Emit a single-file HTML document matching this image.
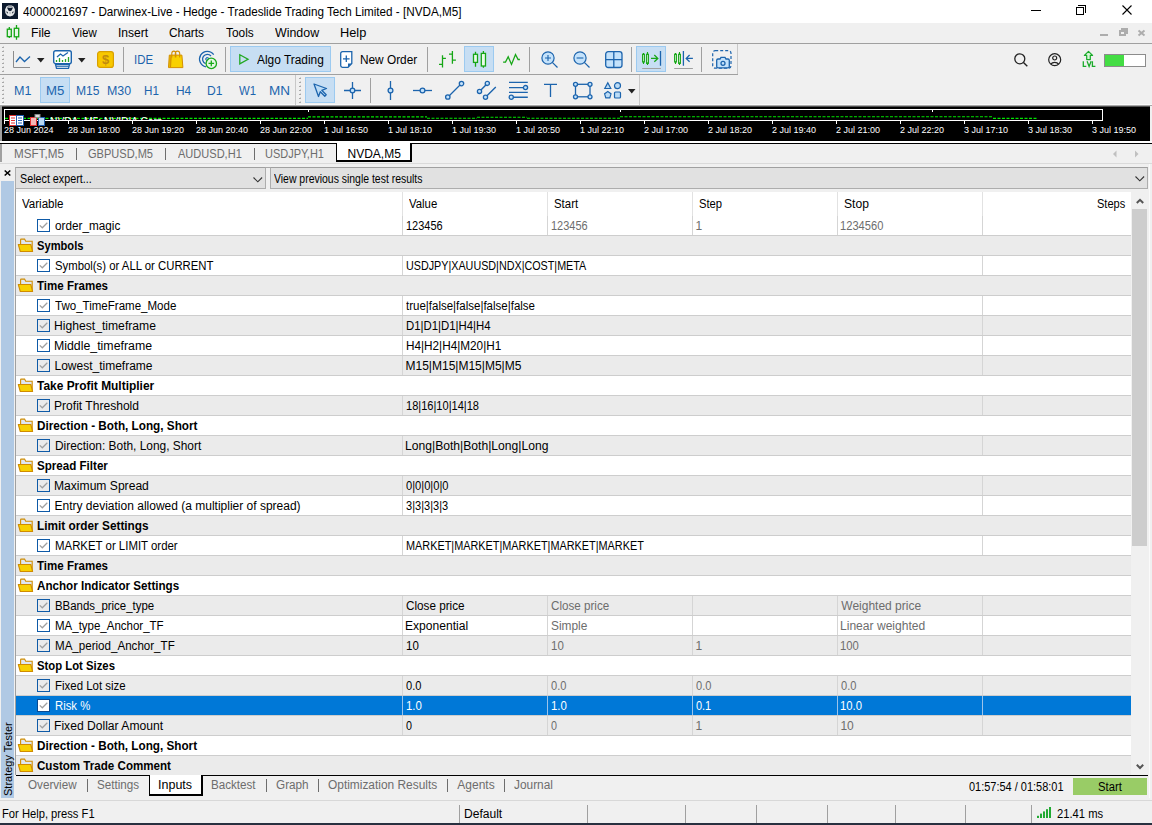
<!DOCTYPE html>
<html><head><meta charset="utf-8">
<style>
*{box-sizing:border-box;margin:0;padding:0}
html,body{width:1152px;height:825px;overflow:hidden;background:#f0f0f0;font-family:"Liberation Sans",sans-serif;color:#000;position:relative}
.a{position:absolute}
.t{position:absolute;white-space:nowrap;line-height:20px;height:20px}
svg{position:absolute;overflow:visible}
</style></head><body>

<div class="a" style="left:0px;top:0px;width:1152px;height:23px;background:#fff;"></div>
<div class="a" style="left:2px;top:3px;width:16px;height:16px;background:#0d1a2e;"></div>
<svg style="left:2px;top:3px" width="16" height="16" viewBox="0 0 16 16"><path d="M4.6 3.3 L6.5 2.4 H9.5 L11.4 3.3 L12.9 6.2 L12.7 10 L11 12.6 L8 13.4 L5 12.6 L3.3 10 L3.1 6.2Z" fill="#e6e8ea"/><rect x="5.6" y="3.2" width="4.8" height="1.2" fill="#8a9098"/><path d="M5 4.6 Q8 5.4 11 4.6 L9.6 7.4 L8 8.3 L6.4 7.4Z" fill="#0d1a2e"/><path d="M4.3 8.2 L5.8 9 L6 10.6 L4.8 10Z M11.7 8.2 L10.2 9 L10 10.6 L11.2 10Z" fill="#2a3340"/><rect x="7.3" y="9.2" width="1.5" height="1.6" fill="#b8bcc0"/></svg>
<div class="t" style="left:22.81px;top:1.84px;font-size:12px;color:#000;font-weight:normal;transform:scaleX(0.9744);transform-origin:0 0;">4000021697 - Darwinex-Live - Hedge - Tradeslide Trading Tech Limited - [NVDA,M5]</div>
<div class="a" style="left:1031px;top:10px;width:10px;height:1px;background:#000;"></div>
<div class="a" style="left:1076px;top:7px;width:8px;height:8px;border:1px solid #000"></div>
<div class="a" style="left:1078px;top:5px;width:8px;height:8px;border-top:1px solid #000;border-right:1px solid #000"></div>
<svg style="left:1122px;top:5px" width="10" height="10" viewBox="0 0 10 10"><path d="M0.5 0.5 L9.5 9.5 M9.5 0.5 L0.5 9.5" stroke="#000" stroke-width="1.1"/></svg>
<div class="a" style="left:0px;top:23px;width:1152px;height:20px;background:#f0f0f0;"></div>
<svg style="left:0px;top:23px" width="24" height="20" viewBox="0 0 24 20"><g stroke="#16a616" stroke-width="1.3" fill="#e6f7e6"><path d="M9.3 4 V14.9 M16.5 2 V16.7"/><rect x="7.3" y="6.2" width="4" height="7.4"/><rect x="14.3" y="5.3" width="4.4" height="8.5"/></g></svg>
<div class="t" style="left:30.98px;top:22.84px;font-size:12px;color:#000;font-weight:normal;transform:scaleX(1.0168);transform-origin:0 0;">File</div>
<div class="t" style="left:72.00px;top:22.84px;font-size:12px;color:#000;font-weight:normal;transform:scaleX(0.9574);transform-origin:0 0;">View</div>
<div class="t" style="left:117.69px;top:22.84px;font-size:12px;color:#000;font-weight:normal;transform:scaleX(1.0069);transform-origin:0 0;">Insert</div>
<div class="t" style="left:169.41px;top:22.84px;font-size:12px;color:#000;font-weight:normal;transform:scaleX(0.9913);transform-origin:0 0;">Charts</div>
<div class="t" style="left:225.80px;top:22.84px;font-size:12px;color:#000;font-weight:normal;transform:scaleX(0.9891);transform-origin:0 0;">Tools</div>
<div class="t" style="left:275.00px;top:22.84px;font-size:12px;color:#000;font-weight:normal;transform:scaleX(1.0328);transform-origin:0 0;">Window</div>
<div class="t" style="left:339.94px;top:22.84px;font-size:12px;color:#000;font-weight:normal;transform:scaleX(1.0647);transform-origin:0 0;">Help</div>
<div class="a" style="left:1100px;top:34px;width:8px;height:2px;background:#adadad;"></div>
<div class="a" style="left:1119px;top:30px;width:7px;height:6px;border:2px solid #adadad"></div>
<div class="a" style="left:1121px;top:28px;width:7px;height:6px;border-top:2px solid #adadad;border-right:2px solid #adadad"></div>
<svg style="left:1138px;top:30px" width="7" height="6" viewBox="0 0 7 6"><path d="M0.5 0.5 L6.5 5.5 M6.5 0.5 L0.5 5.5" stroke="#adadad" stroke-width="2"/></svg>
<div class="a" style="left:0px;top:43px;width:1152px;height:1px;background:#a0a0a0;"></div>
<div class="a" style="left:0px;top:44px;width:1152px;height:30px;background:#f0f0f0;"></div>
<div class="a" style="left:0px;top:74px;width:738px;height:1px;background:#a0a0a0;"></div>
<div class="a" style="left:0px;top:75px;width:1152px;height:30px;background:#f0f0f0;"></div>
<div class="a" style="left:0px;top:104px;width:1152px;height:1px;background:#fafafa;"></div>
<div class="a" style="left:0px;top:105px;width:1152px;height:1px;background:#a8a8a8;"></div>
<svg style="left:2px;top:46px" width="2" height="28" viewBox="0 0 2 28"><path d="M0.2 2 L2 0 V2Z" fill="#a8a8a8"/><rect x="0" y="1" width="2" height="1" fill="#a8a8a8"/><path d="M0.2 6 L2 4 V6Z" fill="#a8a8a8"/><rect x="0" y="5" width="2" height="1" fill="#a8a8a8"/><path d="M0.2 10 L2 8 V10Z" fill="#a8a8a8"/><rect x="0" y="9" width="2" height="1" fill="#a8a8a8"/><path d="M0.2 14 L2 12 V14Z" fill="#a8a8a8"/><rect x="0" y="13" width="2" height="1" fill="#a8a8a8"/><path d="M0.2 18 L2 16 V18Z" fill="#a8a8a8"/><rect x="0" y="17" width="2" height="1" fill="#a8a8a8"/><path d="M0.2 22 L2 20 V22Z" fill="#a8a8a8"/><rect x="0" y="21" width="2" height="1" fill="#a8a8a8"/><path d="M0.2 26 L2 24 V26Z" fill="#a8a8a8"/><rect x="0" y="25" width="2" height="1" fill="#a8a8a8"/></svg>
<svg style="left:2px;top:77px" width="2" height="28" viewBox="0 0 2 28"><path d="M0.2 2 L2 0 V2Z" fill="#a8a8a8"/><rect x="0" y="1" width="2" height="1" fill="#a8a8a8"/><path d="M0.2 6 L2 4 V6Z" fill="#a8a8a8"/><rect x="0" y="5" width="2" height="1" fill="#a8a8a8"/><path d="M0.2 10 L2 8 V10Z" fill="#a8a8a8"/><rect x="0" y="9" width="2" height="1" fill="#a8a8a8"/><path d="M0.2 14 L2 12 V14Z" fill="#a8a8a8"/><rect x="0" y="13" width="2" height="1" fill="#a8a8a8"/><path d="M0.2 18 L2 16 V18Z" fill="#a8a8a8"/><rect x="0" y="17" width="2" height="1" fill="#a8a8a8"/><path d="M0.2 22 L2 20 V22Z" fill="#a8a8a8"/><rect x="0" y="21" width="2" height="1" fill="#a8a8a8"/><path d="M0.2 26 L2 24 V26Z" fill="#a8a8a8"/><rect x="0" y="25" width="2" height="1" fill="#a8a8a8"/></svg>
<svg style="left:299px;top:77px" width="2" height="28" viewBox="0 0 2 28"><path d="M0.2 2 L2 0 V2Z" fill="#a8a8a8"/><rect x="0" y="1" width="2" height="1" fill="#a8a8a8"/><path d="M0.2 6 L2 4 V6Z" fill="#a8a8a8"/><rect x="0" y="5" width="2" height="1" fill="#a8a8a8"/><path d="M0.2 10 L2 8 V10Z" fill="#a8a8a8"/><rect x="0" y="9" width="2" height="1" fill="#a8a8a8"/><path d="M0.2 14 L2 12 V14Z" fill="#a8a8a8"/><rect x="0" y="13" width="2" height="1" fill="#a8a8a8"/><path d="M0.2 18 L2 16 V18Z" fill="#a8a8a8"/><rect x="0" y="17" width="2" height="1" fill="#a8a8a8"/><path d="M0.2 22 L2 20 V22Z" fill="#a8a8a8"/><rect x="0" y="21" width="2" height="1" fill="#a8a8a8"/><path d="M0.2 26 L2 24 V26Z" fill="#a8a8a8"/><rect x="0" y="25" width="2" height="1" fill="#a8a8a8"/></svg>
<div class="a" style="left:123px;top:47px;width:1px;height:25px;background:#a0a0a0;"></div>
<div class="a" style="left:225px;top:47px;width:1px;height:25px;background:#a0a0a0;"></div>
<div class="a" style="left:427px;top:47px;width:1px;height:25px;background:#a0a0a0;"></div>
<div class="a" style="left:529px;top:47px;width:1px;height:25px;background:#a0a0a0;"></div>
<div class="a" style="left:631px;top:47px;width:1px;height:25px;background:#a0a0a0;"></div>
<div class="a" style="left:701px;top:47px;width:1px;height:25px;background:#a0a0a0;"></div>
<div class="a" style="left:737px;top:44px;width:1px;height:30px;background:#c8c8c8;"></div>
<div class="a" style="left:370px;top:78px;width:1px;height:25px;background:#a0a0a0;"></div>
<div class="a" style="left:295px;top:75px;width:1px;height:30px;background:#c8c8c8;"></div>
<div class="a" style="left:639px;top:75px;width:1px;height:30px;background:#c8c8c8;"></div>
<div class="a" style="left:230px;top:46px;width:101px;height:26px;background:#c7def3;border:1px solid #9ccaf0"></div>
<div class="a" style="left:464px;top:46px;width:30px;height:26px;background:#c7def3;border:1px solid #9ccaf0"></div>
<div class="a" style="left:636px;top:46px;width:30px;height:26px;background:#c7def3;border:1px solid #9ccaf0"></div>
<div class="a" style="left:40px;top:77px;width:30px;height:26px;background:#c7def3;border:1px solid #9ccaf0"></div>
<div class="a" style="left:305px;top:77px;width:30px;height:26px;background:#c7def3;border:1px solid #9ccaf0"></div>
<svg style="left:13px;top:51px" width="18" height="17" viewBox="0 0 18 17"><path d="M0.5 0 V16.5 H17" stroke="#8c8c8c" fill="none"/><path d="M3 11 L7 6 L11.5 10.5 L17 5.5" stroke="#1c64ad" stroke-width="1.3" fill="none"/></svg>
<svg style="left:37px;top:58px" width="8" height="5" viewBox="0 0 8 5"><path d="M0 0 H7.5 L3.75 4.5Z" fill="#222"/></svg>
<svg style="left:53px;top:50px" width="19" height="19" viewBox="0 0 19 19"><rect x="0.7" y="0.7" width="17.6" height="13" rx="2" stroke="#1c64ad" stroke-width="1.4" fill="#fff"/><path d="M4 7 L7.5 4 L10 6 L15 2.5" stroke="#1c64ad" stroke-width="1.3" fill="none"/><g stroke="#2aa52a" stroke-width="1.3"><line x1="3.5" y1="10" x2="3.5" y2="12"/><line x1="6.5" y1="8" x2="6.5" y2="12"/><line x1="9.5" y1="10" x2="9.5" y2="12"/><line x1="12.5" y1="9" x2="12.5" y2="12"/><line x1="15.5" y1="7" x2="15.5" y2="12"/></g><path d="M2.5 14.5 H16.5 L15.5 18.3 H3.5Z" stroke="#1c64ad" stroke-width="1.3" fill="#fff"/><line x1="3" y1="16.3" x2="16" y2="16.3" stroke="#1c64ad" stroke-width="1"/></svg>
<svg style="left:78px;top:58px" width="8" height="5" viewBox="0 0 8 5"><path d="M0 0 H7.5 L3.75 4.5Z" fill="#222"/></svg>
<svg style="left:97px;top:51px" width="17" height="17" viewBox="0 0 17 17"><rect x="0.6" y="0.6" width="15.8" height="15.8" rx="2.5" fill="#f8c800" stroke="#d9a000" stroke-width="1.2"/><text x="8.5" y="13.2" font-size="13" font-weight="bold" text-anchor="middle" fill="#c08a10" font-family="Liberation Sans">$</text></svg>
<div class="t" style="left:133.65px;top:49.84px;font-size:12px;color:#1c64ad;font-weight:normal;transform:scaleX(0.9511);transform-origin:0 0;">IDE</div>
<svg style="left:168px;top:50px" width="16" height="19" viewBox="0 0 16 19"><path d="M3.3 5.1 L1.3 5.1 L0.5 17.6 H2.6Z" fill="#eab800" stroke="#d49000" stroke-width="1" stroke-linejoin="round"/><path d="M3.3 5.1 H13.9 L14.9 17.6 H2.5 Z" fill="#f8d000" stroke="#d49000" stroke-width="1" stroke-linejoin="round"/><path d="M3.8 7.6 V3.5 A2 2.4 0 0 1 7.8 3.5 V7.6 M7.3 7.6 V3.5 A2.2 2.4 0 0 1 11.7 3.5 V7.6" stroke="#d49000" stroke-width="1.1" fill="none"/></svg>
<svg style="left:199px;top:50px" width="19" height="20" viewBox="0 0 19 20"><g stroke="#1c64ad" stroke-width="1.3" fill="none"><path d="M14.7 4.6 A7.8 7.8 0 1 0 6.95 16.8"/><path d="M12 6 A4.8 4.8 0 1 0 6.66 13.6"/></g><circle cx="8.3" cy="9.1" r="1.6" fill="#9cc8f0" stroke="#1c64ad" stroke-width="1"/><circle cx="12.3" cy="13.4" r="5.2" fill="#e6f7e6" stroke="#1aaa1a" stroke-width="1.3"/><path d="M12.3 10.6 V16.2 M9.5 13.4 H15.1" stroke="#1aaa1a" stroke-width="1.3"/></svg>
<svg style="left:239px;top:54px" width="10" height="11" viewBox="0 0 10 11"><path d="M0.8 0.8 L9 5.2 L0.8 9.8Z" stroke="#22a822" stroke-width="1.3" fill="none"/></svg>
<div class="t" style="left:257.40px;top:49.84px;font-size:12px;color:#000;font-weight:normal;transform:scaleX(0.9910);transform-origin:0 0;">Algo Trading</div>
<svg style="left:340px;top:51px" width="13" height="17" viewBox="0 0 13 17"><path d="M2.5 0.7 H11.8 V12.5 L8 16.3 H2.5 A1.8 1.8 0 0 1 0.7 14.5 V2.5 A1.8 1.8 0 0 1 2.5 0.7Z" stroke="#1c64ad" stroke-width="1.3" fill="#fff"/><path d="M6.3 4.5 V11 M3 7.8 H9.6" stroke="#1c64ad" stroke-width="1.3"/><path d="M8 16.3 V12.5 H11.8" fill="#1c64ad"/></svg>
<div class="t" style="left:359.81px;top:49.84px;font-size:12px;color:#000;font-weight:normal;transform:scaleX(0.9859);transform-origin:0 0;">New Order</div>
<svg style="left:436px;top:48px" width="90" height="24" viewBox="0 0 90 24"><g stroke="#16a616" stroke-width="1.3" fill="none"><path d="M6.5 7.3 V19.5 M3 16.4 H6.5 M6.5 10.3 H9.9"/><path d="M16.4 3 V15.7 M13 6.1 H16.4 M16.4 12.2 H19.9"/><path d="M39.5 3.8 V18.7 M47.4 3 V19.7"/><rect x="37.5" y="6.3" width="4" height="8.1" fill="#eafbea"/><rect x="45.3" y="5.4" width="4.2" height="12.6" fill="#eafbea"/><path d="M67.1 14.1 H69.5 L72.2 8.8 L75.5 16.4 L79.5 6.5 L82.1 11.5 H83.9" stroke-linejoin="miter"/></g></svg>
<svg style="left:540.5px;top:50.5px" width="18" height="18" viewBox="0 0 18 18"><circle cx="7" cy="7" r="6.1" stroke="#1c64ad" stroke-width="1.2" fill="#c4e2fb"/><path d="M11.3 11.3 L16.5 16.5" stroke="#1c64ad" stroke-width="1.2"/><path d="M7 4 V10 M4 7 H10" stroke="#1c64ad" stroke-width="1.1"/></svg>
<svg style="left:572.5px;top:50.5px" width="18" height="18" viewBox="0 0 18 18"><circle cx="7" cy="7" r="6.1" stroke="#1c64ad" stroke-width="1.2" fill="#c4e2fb"/><path d="M11.3 11.3 L16.5 16.5" stroke="#1c64ad" stroke-width="1.2"/><path d="M3.6 7 H10.4" stroke="#1c64ad" stroke-width="1.1"/></svg>
<svg style="left:605px;top:51px" width="18" height="17" viewBox="0 0 18 17"><rect x="0.7" y="0.7" width="16.3" height="15.8" rx="2.5" stroke="#1c64ad" stroke-width="1.3" fill="#c4e2fb"/><path d="M8.8 1 V16.5 M1 8.6 H17" stroke="#1c64ad" stroke-width="1.3"/></svg>
<svg style="left:638px;top:48px" width="60" height="24" viewBox="0 0 60 24"><g stroke="#16a616" stroke-width="1.1" fill="#eafbea"><path d="M5.5 5 V15.9 M9.5 3.9 V16.9"/><rect x="4.6" y="6.25" width="1.8" height="7.75"/><rect x="8.6" y="6.25" width="1.8" height="9.15"/><path d="M37.5 5 V15.9 M41.5 3.9 V16.9"/><rect x="36.6" y="6.25" width="1.8" height="7.75"/><rect x="40.6" y="6.25" width="1.8" height="9.15"/></g><path d="M13 10.4 H19.5 M16.3 7 L19.8 10.4 L16.3 13.8" stroke="#16a616" stroke-width="1.3" fill="none"/><path d="M22.5 3.1 V17.7 M45.4 3.1 V17.7" stroke="#1c64ad" stroke-width="1.3"/><path d="M54.9 10.4 H48.2 M51.6 7 L48.2 10.4 L51.6 13.8" stroke="#1c64ad" stroke-width="1.3" fill="none"/><path d="M4.2 20.5 H22.9 M36.2 20.5 H54.9" stroke="#a0a0a0" stroke-width="1"/></svg>
<svg style="left:712px;top:50px" width="20" height="19" viewBox="0 0 20 19"><rect x="0.7" y="0.7" width="18.3" height="17.5" rx="2.5" stroke="#1c64ad" stroke-width="1.2" stroke-dasharray="3 2" fill="none"/><path d="M6 9 H8 L9 7.3 H13 L14 9 H16 A1.3 1.3 0 0 1 17.3 10.3 V16.5 A1.3 1.3 0 0 1 16 17.8 H6 A1.3 1.3 0 0 1 4.7 16.5 V10.3 A1.3 1.3 0 0 1 6 9Z" stroke="#1c64ad" stroke-width="1.3" fill="#c4e2fb"/><circle cx="11" cy="13.3" r="2" stroke="#1c64ad" stroke-width="1.3" fill="none"/></svg>
<svg style="left:1014px;top:53px" width="14" height="14" viewBox="0 0 14 14"><circle cx="5.8" cy="5.8" r="5" stroke="#222" stroke-width="1.3" fill="none"/><path d="M9.5 9.5 L13.3 13.3" stroke="#222" stroke-width="1.4"/></svg>
<svg style="left:1048px;top:53px" width="14" height="14" viewBox="0 0 14 14"><circle cx="6.7" cy="6.7" r="6" stroke="#222" stroke-width="1.2" fill="none"/><circle cx="6.7" cy="5" r="2" stroke="#222" stroke-width="1.2" fill="none"/><path d="M2.8 11.2 A4.5 3.5 0 0 1 10.6 11.2" stroke="#222" stroke-width="1.2" fill="none"/></svg>
<svg style="left:1075px;top:48px" width="24" height="22" viewBox="0 0 24 22"><path d="M13.5 3.4 L17.6 7.4 H15.3 V11.6 H11.7 V7.4 H9.4Z" stroke="#1aaa2a" stroke-width="1.2" fill="#d8f5d8" stroke-linejoin="round"/><path d="M8.3 13.3 V18.4 H11.3 M12.1 13.3 L14.1 18.4 L16.1 13.3 M17.4 13.3 V18.4 H20.4" stroke="#1aaa2a" stroke-width="1.3" fill="none"/></svg>
<div class="a" style="left:1104px;top:54px;width:42px;height:13px;border:1px solid #8c8c8c;background:#fff"></div>
<div class="a" style="left:1105px;top:55px;width:19px;height:11px;background:#44dd44;"></div>
<div class="t" style="left:14.15px;top:80.84px;font-size:12px;color:#1c64ad;font-weight:normal;transform:scaleX(1.0464);transform-origin:0 0;">M1</div>
<div class="t" style="left:46.30px;top:80.84px;font-size:12px;color:#1c64ad;font-weight:normal;transform:scaleX(1.0987);transform-origin:0 0;">M5</div>
<div class="t" style="left:75.69px;top:80.84px;font-size:12px;color:#1c64ad;font-weight:normal;transform:scaleX(1.0091);transform-origin:0 0;">M15</div>
<div class="t" style="left:107.27px;top:80.84px;font-size:12px;color:#1c64ad;font-weight:normal;transform:scaleX(1.0320);transform-origin:0 0;">M30</div>
<div class="t" style="left:143.83px;top:80.84px;font-size:12px;color:#1c64ad;font-weight:normal;transform:scaleX(0.9710);transform-origin:0 0;">H1</div>
<div class="t" style="left:175.71px;top:80.84px;font-size:12px;color:#1c64ad;font-weight:normal;transform:scaleX(0.9929);transform-origin:0 0;">H4</div>
<div class="t" style="left:207.49px;top:80.84px;font-size:12px;color:#1c64ad;font-weight:normal;transform:scaleX(1.0072);transform-origin:0 0;">D1</div>
<div class="t" style="left:238.90px;top:80.84px;font-size:12px;color:#1c64ad;font-weight:normal;transform:scaleX(0.9483);transform-origin:0 0;">W1</div>
<div class="t" style="left:268.97px;top:80.84px;font-size:12px;color:#1c64ad;font-weight:normal;transform:scaleX(1.1257);transform-origin:0 0;">MN</div>
<svg style="left:313px;top:83px" width="15" height="15" viewBox="0 0 15 15"><path d="M1 1 L13.5 5.5 L8.8 7.3 L13.2 11.8 L11.8 13.2 L7.3 8.8 L5.5 13.5Z" stroke="#1c64ad" stroke-width="1.3" fill="#bcdcf6" stroke-linejoin="round"/></svg>
<svg style="left:344px;top:82px" width="18" height="18" viewBox="0 0 18 18"><path d="M8.5 0 V17 M0 8.5 H17" stroke="#1c64ad" stroke-width="1.3"/><circle cx="8.5" cy="8.5" r="2.3" stroke="#1c64ad" stroke-width="1.3" fill="#c4e2fb"/></svg>
<svg style="left:387px;top:81px" width="8" height="19" viewBox="0 0 8 19"><path d="M3.5 0 V19" stroke="#1c64ad" stroke-width="1.3"/><circle cx="3.5" cy="9.5" r="2.4" stroke="#1c64ad" stroke-width="1.3" fill="#c4e2fb"/></svg>
<svg style="left:413px;top:87px" width="19" height="8" viewBox="0 0 19 8"><path d="M0 3.5 H19" stroke="#1c64ad" stroke-width="1.3"/><circle cx="9.5" cy="3.5" r="2.4" stroke="#1c64ad" stroke-width="1.3" fill="#c4e2fb"/></svg>
<svg style="left:445px;top:81px" width="20" height="19" viewBox="0 0 20 19"><path d="M3 16 L16.5 2.5" stroke="#1c64ad" stroke-width="1.3"/><circle cx="2.8" cy="16" r="2.2" stroke="#1c64ad" stroke-width="1.3" fill="#c4e2fb"/><circle cx="16.5" cy="2.6" r="2.2" stroke="#1c64ad" stroke-width="1.3" fill="#c4e2fb"/></svg>
<svg style="left:477px;top:81px" width="20" height="19" viewBox="0 0 20 19"><path d="M2.5 10.4 L10.3 2.4 M8.5 16.25 L18.8 6.1" stroke="#1c64ad" stroke-width="1.4"/><g stroke="#1c64ad" stroke-width="1.3" fill="#c4e2fb"><circle cx="2.5" cy="10.4" r="2.1"/><circle cx="10.3" cy="2.4" r="2.1"/><circle cx="8.5" cy="16.25" r="2.1"/></g></svg>
<svg style="left:509px;top:82px" width="20" height="17" viewBox="0 0 20 17"><path d="M0 0.4 H18.8 M0 5.6 H16 M0 10.4 H18.8 M2.5 15.25 H18.8" stroke="#1c64ad" stroke-width="1.4"/><g stroke="#1c64ad" stroke-width="1.3" fill="#c4e2fb"><circle cx="16.5" cy="5.6" r="2.1"/><circle cx="2.25" cy="15.25" r="2.1"/></g></svg>
<svg style="left:544px;top:83px" width="14" height="15" viewBox="0 0 14 15"><path d="M0 1.3 H13 M6.5 1.3 V14" stroke="#1c64ad" stroke-width="1.3"/></svg>
<svg style="left:573px;top:82px" width="20" height="17" viewBox="0 0 20 17"><rect x="2.5" y="2.3" width="14.5" height="12.5" stroke="#1c64ad" stroke-width="1.3" fill="none"/><g stroke="#1c64ad" stroke-width="1.3" fill="#c4e2fb"><circle cx="2.5" cy="2.3" r="2"/><circle cx="17" cy="2.3" r="2"/><circle cx="2.5" cy="14.8" r="2"/><circle cx="17" cy="14.8" r="2"/></g></svg>
<svg style="left:604px;top:82px" width="18" height="17" viewBox="0 0 18 17"><g stroke="#1c64ad" stroke-width="1.2" fill="#bcdcf6"><path d="M3.8 0.8 L6.8 6.5 H0.8Z"/><circle cx="13.5" cy="3.7" r="3"/><path d="M3.8 9.5 L7 11.8 L5.8 15.8 H1.8 L0.6 11.8Z"/><rect x="10.5" y="10" width="6" height="6" rx="1"/></g></svg>
<svg style="left:628px;top:89px" width="8" height="5" viewBox="0 0 8 5"><path d="M0 0 H7.5 L3.75 4.5Z" fill="#222"/></svg>
<div class="a" style="left:0px;top:106px;width:1152px;height:35px;background:#000;"></div>
<div class="a" style="left:0px;top:106px;width:1152px;height:1px;background:#505050;"></div>
<div class="a" style="left:0px;top:106px;width:2px;height:35px;background:#a0a0a0;"></div>
<div class="a" style="left:1150px;top:106px;width:2px;height:35px;background:#f0f0f0;"></div>
<div class="a" style="left:4px;top:109px;width:1099px;height:12px;border:1px solid #fff;border-bottom:none"></div>
<div class="a" style="left:4px;top:120px;width:1099px;height:1px;background:#fff;"></div>
<svg style="left:0px;top:110px" width="1100" height="10" viewBox="0 0 1100 10"><g stroke="#00e400" stroke-width="1.1" stroke-dasharray="3 1.5"><path d="M5 8.4 H308"/><path d="M308 6.9 H427"/><path d="M427 8.2 H477"/><path d="M477 7.2 H527"/><path d="M527 8.2 H620"/><path d="M620 6.7 H993"/><path d="M993 8.4 H1037"/></g></svg>
<div class="a" style="left:620px;top:110px;width:1px;height:2px;background:#fff;"></div>
<div class="a" style="left:308px;top:110px;width:1px;height:2px;background:#fff;"></div>
<div class="a" style="left:932px;top:110px;width:1px;height:2px;background:#fff;"></div>
<div class="a" style="left:932px;top:110px;width:1px;height:2px;background:#fff;"></div>
<div class="a" style="left:50px;top:117px;width:200px;height:3px;overflow:hidden"><div class="t" style="left:0;top:-3px;font-size:11px;color:#fff;line-height:14px;height:14px;transform:scaleX(0.93);transform-origin:0 0">NVDA, M5:  NVIDIA Corp</div></div>
<svg style="left:9px;top:115px" width="15" height="11" viewBox="0 0 15 11"><rect x="0.5" y="0.5" width="14" height="10" fill="#fff" stroke="#e03030"/><path d="M2 3 H6 M2 5.5 H6 M2 8 H6" stroke="#e03030"/><rect x="7.5" y="0.5" width="7" height="10" fill="#fff" stroke="#1e5eb0"/><path d="M9 3 H13 M9 5.5 H13 M9 8 H13" stroke="#1e5eb0"/></svg>
<svg style="left:30px;top:114px" width="15" height="12" viewBox="0 0 15 12"><rect x="0.5" y="3.5" width="6" height="8" fill="#f4b8b8" stroke="#e03030"/><rect x="8.5" y="3.5" width="6" height="8" fill="#b8d8f4" stroke="#1e5eb0"/><rect x="5" y="0.5" width="5" height="3" fill="#ddd" stroke="#888"/></svg>
<div class="t" style="left:4px;top:123px;font-size:9px;color:#fff;line-height:14px;height:14px">28 Jun 2024</div>
<div class="a" style="left:68px;top:120px;width:1px;height:4px;background:#fff;"></div>
<div class="t" style="left:68px;top:123px;font-size:9px;color:#fff;line-height:14px;height:14px">28 Jun 18:00</div>
<div class="a" style="left:132px;top:120px;width:1px;height:4px;background:#fff;"></div>
<div class="t" style="left:132px;top:123px;font-size:9px;color:#fff;line-height:14px;height:14px">28 Jun 19:20</div>
<div class="a" style="left:196px;top:120px;width:1px;height:4px;background:#fff;"></div>
<div class="t" style="left:196px;top:123px;font-size:9px;color:#fff;line-height:14px;height:14px">28 Jun 20:40</div>
<div class="a" style="left:260px;top:120px;width:1px;height:4px;background:#fff;"></div>
<div class="t" style="left:260px;top:123px;font-size:9px;color:#fff;line-height:14px;height:14px">28 Jun 22:00</div>
<div class="a" style="left:324px;top:120px;width:1px;height:4px;background:#fff;"></div>
<div class="t" style="left:324px;top:123px;font-size:9px;color:#fff;line-height:14px;height:14px">1 Jul 16:50</div>
<div class="a" style="left:388px;top:120px;width:1px;height:4px;background:#fff;"></div>
<div class="t" style="left:388px;top:123px;font-size:9px;color:#fff;line-height:14px;height:14px">1 Jul 18:10</div>
<div class="a" style="left:452px;top:120px;width:1px;height:4px;background:#fff;"></div>
<div class="t" style="left:452px;top:123px;font-size:9px;color:#fff;line-height:14px;height:14px">1 Jul 19:30</div>
<div class="a" style="left:516px;top:120px;width:1px;height:4px;background:#fff;"></div>
<div class="t" style="left:516px;top:123px;font-size:9px;color:#fff;line-height:14px;height:14px">1 Jul 20:50</div>
<div class="a" style="left:580px;top:120px;width:1px;height:4px;background:#fff;"></div>
<div class="t" style="left:580px;top:123px;font-size:9px;color:#fff;line-height:14px;height:14px">1 Jul 22:10</div>
<div class="a" style="left:644px;top:120px;width:1px;height:4px;background:#fff;"></div>
<div class="t" style="left:644px;top:123px;font-size:9px;color:#fff;line-height:14px;height:14px">2 Jul 17:00</div>
<div class="a" style="left:708px;top:120px;width:1px;height:4px;background:#fff;"></div>
<div class="t" style="left:708px;top:123px;font-size:9px;color:#fff;line-height:14px;height:14px">2 Jul 18:20</div>
<div class="a" style="left:772px;top:120px;width:1px;height:4px;background:#fff;"></div>
<div class="t" style="left:772px;top:123px;font-size:9px;color:#fff;line-height:14px;height:14px">2 Jul 19:40</div>
<div class="a" style="left:836px;top:120px;width:1px;height:4px;background:#fff;"></div>
<div class="t" style="left:836px;top:123px;font-size:9px;color:#fff;line-height:14px;height:14px">2 Jul 21:00</div>
<div class="a" style="left:900px;top:120px;width:1px;height:4px;background:#fff;"></div>
<div class="t" style="left:900px;top:123px;font-size:9px;color:#fff;line-height:14px;height:14px">2 Jul 22:20</div>
<div class="a" style="left:964px;top:120px;width:1px;height:4px;background:#fff;"></div>
<div class="t" style="left:964px;top:123px;font-size:9px;color:#fff;line-height:14px;height:14px">3 Jul 17:10</div>
<div class="a" style="left:1028px;top:120px;width:1px;height:4px;background:#fff;"></div>
<div class="t" style="left:1028px;top:123px;font-size:9px;color:#fff;line-height:14px;height:14px">3 Jul 18:30</div>
<div class="a" style="left:1092px;top:120px;width:1px;height:4px;background:#fff;"></div>
<div class="t" style="left:1092px;top:123px;font-size:9px;color:#fff;line-height:14px;height:14px">3 Jul 19:50</div>
<div class="a" style="left:4px;top:120px;width:1px;height:4px;background:#fff;"></div>
<div class="a" style="left:0px;top:141px;width:1152px;height:2px;background:#fff;"></div>
<div class="a" style="left:0px;top:143px;width:1152px;height:1px;background:#000;"></div>
<div class="a" style="left:0px;top:144px;width:1152px;height:19px;background:#f0f0f0;"></div>
<div class="t" style="left:14.03px;top:143.84px;font-size:12px;color:#6d6d6d;font-weight:normal;transform:scaleX(0.9719);transform-origin:0 0;">MSFT,M5</div>
<div class="t" style="left:88.45px;top:143.84px;font-size:12px;color:#6d6d6d;font-weight:normal;transform:scaleX(0.9195);transform-origin:0 0;">GBPUSD,M5</div>
<div class="t" style="left:178.00px;top:143.84px;font-size:12px;color:#6d6d6d;font-weight:normal;transform:scaleX(0.9201);transform-origin:0 0;">AUDUSD,H1</div>
<div class="t" style="left:265.18px;top:143.84px;font-size:12px;color:#6d6d6d;font-weight:normal;transform:scaleX(0.9143);transform-origin:0 0;">USDJPY,H1</div>
<div class="a" style="left:76px;top:148px;width:1px;height:12px;background:#6d6d6d;"></div>
<div class="a" style="left:165px;top:148px;width:1px;height:12px;background:#6d6d6d;"></div>
<div class="a" style="left:254px;top:148px;width:1px;height:12px;background:#6d6d6d;"></div>
<div class="a" style="left:336px;top:143px;width:76px;height:19px;background:#fff;border:1px solid #000;border-top:none;border-right-width:2px;border-bottom-width:2px"></div>
<div class="t" style="left:347.50px;top:143.84px;font-size:12px;color:#000;font-weight:normal;">NVDA,M5</div>
<svg style="left:1112px;top:150px" width="6" height="8" viewBox="0 0 6 8"><path d="M4.5 0.5 L1 4 L4.5 7.5Z" fill="#c0c0c0"/></svg>
<svg style="left:1134px;top:150px" width="6" height="8" viewBox="0 0 6 8"><path d="M1 0.5 L4.5 4 L1 7.5Z" fill="#c0c0c0"/></svg>
<div class="a" style="left:0px;top:163px;width:1152px;height:1px;background:#dadada;"></div>
<div class="a" style="left:0px;top:144px;width:2px;height:18px;background:#a0a0a0;"></div>
<div class="a" style="left:0px;top:164px;width:1152px;height:636px;background:#f0f0f0;"></div>
<svg style="left:4px;top:170px" width="7" height="6" viewBox="0 0 7 6"><path d="M0.7 0.5 L6.3 5.5 M6.3 0.5 L0.7 5.5" stroke="#000" stroke-width="1.6"/></svg>
<div class="a" style="left:1px;top:181px;width:13px;height:617px;background:#b0c9e4;"></div>
<div class="a" style="left:15px;top:167px;width:251px;height:22px;background:#e1e1e1;border:1px solid #adadad;border-top-color:#a0a0a0"></div>
<div class="t" style="left:19.85px;top:168.84px;font-size:12px;color:#000;font-weight:normal;transform:scaleX(0.8955);transform-origin:0 0;">Select expert...</div>
<svg style="left:252.5px;top:176.5px" width="10" height="6" viewBox="0 0 10 6"><path d="M0.5 0.5 L4.8 4.8 L9.1 0.5" stroke="#333" stroke-width="1.1" fill="none"/></svg>
<div class="a" style="left:270px;top:167px;width:878px;height:22px;background:#e1e1e1;border:1px solid #adadad;border-top-color:#a0a0a0"></div>
<div class="a" style="left:266px;top:167px;width:4px;height:1px;background:#a8a8a8;"></div>
<div class="t" style="left:274.00px;top:168.84px;font-size:12px;color:#000;font-weight:normal;transform:scaleX(0.8707);transform-origin:0 0;">View previous single test results</div>
<svg style="left:1134.5px;top:176px" width="10" height="6" viewBox="0 0 10 6"><path d="M0.5 0.5 L4.8 4.8 L9.1 0.5" stroke="#333" stroke-width="1.1" fill="none"/></svg>
<div class="a" style="left:15px;top:189px;width:1px;height:586px;background:#a0a0a0;"></div>
<div class="a" style="left:2.3px;top:795.5px;width:90px;height:12px;transform-origin:0 0;transform:rotate(-90deg);font-size:11px;line-height:12px;white-space:nowrap;color:#000">Strategy Tester</div>
<div class="a" style="left:16px;top:189px;width:1115px;height:586px;background:#fff;"></div>
<div class="a" style="left:16px;top:189px;width:1115px;height:3px;background:#f0f0f0;"></div>
<div class="a" style="left:1131px;top:189px;width:1px;height:586px;background:#f8f8f8;"></div>
<div class="a" style="left:1149px;top:164px;width:1px;height:634px;background:#fafafa;"></div>
<div class="t" style="left:21.90px;top:193.84px;font-size:12px;color:#000;font-weight:normal;transform:scaleX(0.9625);transform-origin:0 0;">Variable</div>
<div class="t" style="left:409.10px;top:193.84px;font-size:12px;color:#000;font-weight:normal;transform:scaleX(0.9488);transform-origin:0 0;">Value</div>
<div class="t" style="left:553.92px;top:193.84px;font-size:12px;color:#000;font-weight:normal;transform:scaleX(0.9516);transform-origin:0 0;">Start</div>
<div class="t" style="left:698.53px;top:193.84px;font-size:12px;color:#000;font-weight:normal;transform:scaleX(0.9367);transform-origin:0 0;">Step</div>
<div class="t" style="left:843.50px;top:193.84px;font-size:12px;color:#000;font-weight:normal;transform:scaleX(1.0084);transform-origin:0 0;">Stop</div>
<div class="t" style="left:1096.94px;top:193.84px;font-size:12px;color:#000;font-weight:normal;transform:scaleX(0.9195);transform-origin:0 0;">Steps</div>
<div class="a" style="left:402px;top:192px;width:1px;height:24px;background:#e2e2e2;"></div>
<div class="a" style="left:547px;top:192px;width:1px;height:24px;background:#e2e2e2;"></div>
<div class="a" style="left:692px;top:192px;width:1px;height:24px;background:#e2e2e2;"></div>
<div class="a" style="left:837px;top:192px;width:1px;height:24px;background:#e2e2e2;"></div>
<div class="a" style="left:982px;top:192px;width:1px;height:24px;background:#e2e2e2;"></div>
<div class="a" style="left:16px;top:216px;width:1115px;height:19px;background:#fff;"></div>
<div class="a" style="left:16px;top:235px;width:1115px;height:1px;background:#cdcdcd;"></div>
<div class="a" style="left:37px;top:219px;width:13px;height:13px;border:1px solid #0e5aa7;background:transparent"></div>
<svg style="left:39px;top:222px" width="9" height="7" viewBox="0 0 9 7"><path d="M0.8 3.4 L3.3 5.8 L8.3 0.8" stroke="#a0a0a0" stroke-width="1.25" fill="none"/></svg>
<div class="t" style="left:55.01px;top:215.84px;font-size:12px;color:#000;font-weight:normal;transform:scaleX(0.9788);transform-origin:0 0;">order_magic</div>
<div class="a" style="left:402px;top:216px;width:1px;height:19px;background:#d5d5d5;"></div>
<div class="a" style="left:982px;top:216px;width:1px;height:19px;background:#d5d5d5;"></div>
<div class="a" style="left:547px;top:216px;width:1px;height:19px;background:#d5d5d5;"></div>
<div class="a" style="left:692px;top:216px;width:1px;height:19px;background:#d5d5d5;"></div>
<div class="a" style="left:837px;top:216px;width:1px;height:19px;background:#d5d5d5;"></div>
<div class="t" style="left:405.68px;top:215.84px;font-size:12px;color:#000;font-weight:normal;transform:scaleX(0.9147);transform-origin:0 0;">123456</div>
<div class="t" style="left:550.68px;top:215.84px;font-size:12px;color:#6d6d6d;font-weight:normal;transform:scaleX(0.9147);transform-origin:0 0;">123456</div>
<div class="t" style="left:695.60px;top:215.84px;font-size:12px;color:#6d6d6d;font-weight:normal;">1</div>
<div class="t" style="left:840.47px;top:215.84px;font-size:12px;color:#6d6d6d;font-weight:normal;transform:scaleX(0.9272);transform-origin:0 0;">1234560</div>
<div class="a" style="left:16px;top:236px;width:1115px;height:19px;background:#ebebeb;"></div>
<div class="a" style="left:16px;top:255px;width:1115px;height:1px;background:#cdcdcd;"></div>
<svg style="left:16px;top:236px" width="20" height="20" viewBox="0 0 20 20"><path d="M4.6 9 V3.7 Q4.6 3.1 5.2 3.1 H8.6 L9.7 5.2 H16.2 V15.5" fill="#dfe6f0" stroke="#d08c00" stroke-width="1.1"/><path d="M2.3 8.5 H14.8 L16.6 15.5 H4.3Z" fill="#f8d000" stroke="#d08c00" stroke-width="1.1" stroke-linejoin="round"/></svg>
<div class="t" style="left:37.22px;top:235.84px;font-size:12px;color:#000;font-weight:bold;transform:scaleX(0.9289);transform-origin:0 0;">Symbols</div>
<div class="a" style="left:16px;top:256px;width:1115px;height:19px;background:#fff;"></div>
<div class="a" style="left:16px;top:275px;width:1115px;height:1px;background:#cdcdcd;"></div>
<div class="a" style="left:37px;top:259px;width:13px;height:13px;border:1px solid #0e5aa7;background:transparent"></div>
<svg style="left:39px;top:262px" width="9" height="7" viewBox="0 0 9 7"><path d="M0.8 3.4 L3.3 5.8 L8.3 0.8" stroke="#a0a0a0" stroke-width="1.25" fill="none"/></svg>
<div class="t" style="left:55.03px;top:255.84px;font-size:12px;color:#000;font-weight:normal;transform:scaleX(0.9455);transform-origin:0 0;">Symbol(s) or ALL or CURRENT</div>
<div class="a" style="left:402px;top:256px;width:1px;height:19px;background:#d5d5d5;"></div>
<div class="a" style="left:982px;top:256px;width:1px;height:19px;background:#d5d5d5;"></div>
<div class="t" style="left:405.69px;top:255.84px;font-size:12px;color:#000;font-weight:normal;transform:scaleX(0.8970);transform-origin:0 0;">USDJPY|XAUUSD|NDX|COST|META</div>
<div class="a" style="left:16px;top:276px;width:1115px;height:19px;background:#ebebeb;"></div>
<div class="a" style="left:16px;top:295px;width:1115px;height:1px;background:#cdcdcd;"></div>
<svg style="left:16px;top:276px" width="20" height="20" viewBox="0 0 20 20"><path d="M4.6 9 V3.7 Q4.6 3.1 5.2 3.1 H8.6 L9.7 5.2 H16.2 V15.5" fill="#dfe6f0" stroke="#d08c00" stroke-width="1.1"/><path d="M2.3 8.5 H14.8 L16.6 15.5 H4.3Z" fill="#f8d000" stroke="#d08c00" stroke-width="1.1" stroke-linejoin="round"/></svg>
<div class="t" style="left:37.40px;top:275.84px;font-size:12px;color:#000;font-weight:bold;transform:scaleX(0.9617);transform-origin:0 0;">Time Frames</div>
<div class="a" style="left:16px;top:296px;width:1115px;height:19px;background:#fff;"></div>
<div class="a" style="left:16px;top:315px;width:1115px;height:1px;background:#cdcdcd;"></div>
<div class="a" style="left:37px;top:299px;width:13px;height:13px;border:1px solid #0e5aa7;background:transparent"></div>
<svg style="left:39px;top:302px" width="9" height="7" viewBox="0 0 9 7"><path d="M0.8 3.4 L3.3 5.8 L8.3 0.8" stroke="#a0a0a0" stroke-width="1.25" fill="none"/></svg>
<div class="t" style="left:55.31px;top:295.84px;font-size:12px;color:#000;font-weight:normal;transform:scaleX(0.9610);transform-origin:0 0;">Two_TimeFrame_Mode</div>
<div class="a" style="left:402px;top:296px;width:1px;height:19px;background:#d5d5d5;"></div>
<div class="a" style="left:982px;top:296px;width:1px;height:19px;background:#d5d5d5;"></div>
<div class="t" style="left:406.31px;top:295.84px;font-size:12px;color:#000;font-weight:normal;transform:scaleX(0.9589);transform-origin:0 0;">true|false|false|false|false</div>
<div class="a" style="left:16px;top:316px;width:1115px;height:19px;background:#ebebeb;"></div>
<div class="a" style="left:16px;top:335px;width:1115px;height:1px;background:#cdcdcd;"></div>
<div class="a" style="left:37px;top:319px;width:13px;height:13px;border:1px solid #0e5aa7;background:transparent"></div>
<svg style="left:39px;top:322px" width="9" height="7" viewBox="0 0 9 7"><path d="M0.8 3.4 L3.3 5.8 L8.3 0.8" stroke="#a0a0a0" stroke-width="1.25" fill="none"/></svg>
<div class="t" style="left:54.49px;top:315.84px;font-size:12px;color:#000;font-weight:normal;transform:scaleX(1.0121);transform-origin:0 0;">Highest_timeframe</div>
<div class="a" style="left:402px;top:316px;width:1px;height:19px;background:#d5d5d5;"></div>
<div class="a" style="left:982px;top:316px;width:1px;height:19px;background:#d5d5d5;"></div>
<div class="t" style="left:405.55px;top:315.84px;font-size:12px;color:#000;font-weight:normal;transform:scaleX(0.9487);transform-origin:0 0;">D1|D1|D1|H4|H4</div>
<div class="a" style="left:16px;top:336px;width:1115px;height:19px;background:#fff;"></div>
<div class="a" style="left:16px;top:355px;width:1115px;height:1px;background:#cdcdcd;"></div>
<div class="a" style="left:37px;top:339px;width:13px;height:13px;border:1px solid #0e5aa7;background:transparent"></div>
<svg style="left:39px;top:342px" width="9" height="7" viewBox="0 0 9 7"><path d="M0.8 3.4 L3.3 5.8 L8.3 0.8" stroke="#a0a0a0" stroke-width="1.25" fill="none"/></svg>
<div class="t" style="left:54.47px;top:335.84px;font-size:12px;color:#000;font-weight:normal;transform:scaleX(1.0277);transform-origin:0 0;">Middle_timeframe</div>
<div class="a" style="left:402px;top:336px;width:1px;height:19px;background:#d5d5d5;"></div>
<div class="a" style="left:982px;top:336px;width:1px;height:19px;background:#d5d5d5;"></div>
<div class="t" style="left:405.52px;top:335.84px;font-size:12px;color:#000;font-weight:normal;transform:scaleX(0.9801);transform-origin:0 0;">H4|H2|H4|M20|H1</div>
<div class="a" style="left:16px;top:356px;width:1115px;height:19px;background:#ebebeb;"></div>
<div class="a" style="left:16px;top:375px;width:1115px;height:1px;background:#cdcdcd;"></div>
<div class="a" style="left:37px;top:359px;width:13px;height:13px;border:1px solid #0e5aa7;background:transparent"></div>
<svg style="left:39px;top:362px" width="9" height="7" viewBox="0 0 9 7"><path d="M0.8 3.4 L3.3 5.8 L8.3 0.8" stroke="#a0a0a0" stroke-width="1.25" fill="none"/></svg>
<div class="t" style="left:54.50px;top:355.84px;font-size:12px;color:#000;font-weight:normal;">Lowest_timeframe</div>
<div class="a" style="left:402px;top:356px;width:1px;height:19px;background:#d5d5d5;"></div>
<div class="a" style="left:982px;top:356px;width:1px;height:19px;background:#d5d5d5;"></div>
<div class="t" style="left:405.50px;top:355.84px;font-size:12px;color:#000;font-weight:normal;">M15|M15|M15|M5|M5</div>
<div class="a" style="left:16px;top:376px;width:1115px;height:19px;background:#fff;"></div>
<div class="a" style="left:16px;top:395px;width:1115px;height:1px;background:#cdcdcd;"></div>
<svg style="left:16px;top:376px" width="20" height="20" viewBox="0 0 20 20"><path d="M4.6 9 V3.7 Q4.6 3.1 5.2 3.1 H8.6 L9.7 5.2 H16.2 V15.5" fill="#dfe6f0" stroke="#d08c00" stroke-width="1.1"/><path d="M2.3 8.5 H14.8 L16.6 15.5 H4.3Z" fill="#f8d000" stroke="#d08c00" stroke-width="1.1" stroke-linejoin="round"/></svg>
<div class="t" style="left:37.40px;top:375.84px;font-size:12px;color:#000;font-weight:bold;transform:scaleX(0.9949);transform-origin:0 0;">Take Profit Multiplier</div>
<div class="a" style="left:16px;top:396px;width:1115px;height:19px;background:#ebebeb;"></div>
<div class="a" style="left:16px;top:415px;width:1115px;height:1px;background:#cdcdcd;"></div>
<div class="a" style="left:37px;top:399px;width:13px;height:13px;border:1px solid #0e5aa7;background:transparent"></div>
<svg style="left:39px;top:402px" width="9" height="7" viewBox="0 0 9 7"><path d="M0.8 3.4 L3.3 5.8 L8.3 0.8" stroke="#a0a0a0" stroke-width="1.25" fill="none"/></svg>
<div class="t" style="left:54.49px;top:395.84px;font-size:12px;color:#000;font-weight:normal;transform:scaleX(1.0060);transform-origin:0 0;">Profit Threshold</div>
<div class="a" style="left:402px;top:396px;width:1px;height:19px;background:#d5d5d5;"></div>
<div class="a" style="left:982px;top:396px;width:1px;height:19px;background:#d5d5d5;"></div>
<div class="t" style="left:405.67px;top:395.84px;font-size:12px;color:#000;font-weight:normal;transform:scaleX(0.9216);transform-origin:0 0;">18|16|10|14|18</div>
<div class="a" style="left:16px;top:416px;width:1115px;height:19px;background:#fff;"></div>
<div class="a" style="left:16px;top:435px;width:1115px;height:1px;background:#cdcdcd;"></div>
<svg style="left:16px;top:416px" width="20" height="20" viewBox="0 0 20 20"><path d="M4.6 9 V3.7 Q4.6 3.1 5.2 3.1 H8.6 L9.7 5.2 H16.2 V15.5" fill="#dfe6f0" stroke="#d08c00" stroke-width="1.1"/><path d="M2.3 8.5 H14.8 L16.6 15.5 H4.3Z" fill="#f8d000" stroke="#d08c00" stroke-width="1.1" stroke-linejoin="round"/></svg>
<div class="t" style="left:36.72px;top:415.84px;font-size:12px;color:#000;font-weight:bold;transform:scaleX(0.9785);transform-origin:0 0;">Direction - Both, Long, Short</div>
<div class="a" style="left:16px;top:436px;width:1115px;height:19px;background:#ebebeb;"></div>
<div class="a" style="left:16px;top:455px;width:1115px;height:1px;background:#cdcdcd;"></div>
<div class="a" style="left:37px;top:439px;width:13px;height:13px;border:1px solid #0e5aa7;background:transparent"></div>
<svg style="left:39px;top:442px" width="9" height="7" viewBox="0 0 9 7"><path d="M0.8 3.4 L3.3 5.8 L8.3 0.8" stroke="#a0a0a0" stroke-width="1.25" fill="none"/></svg>
<div class="t" style="left:54.51px;top:435.84px;font-size:12px;color:#000;font-weight:normal;transform:scaleX(0.9918);transform-origin:0 0;">Direction: Both, Long, Short</div>
<div class="a" style="left:402px;top:436px;width:1px;height:19px;background:#d5d5d5;"></div>
<div class="a" style="left:982px;top:436px;width:1px;height:19px;background:#d5d5d5;"></div>
<div class="t" style="left:405.49px;top:435.84px;font-size:12px;color:#000;font-weight:normal;transform:scaleX(1.0107);transform-origin:0 0;">Long|Both|Both|Long|Long</div>
<div class="a" style="left:16px;top:456px;width:1115px;height:19px;background:#fff;"></div>
<div class="a" style="left:16px;top:475px;width:1115px;height:1px;background:#cdcdcd;"></div>
<svg style="left:16px;top:456px" width="20" height="20" viewBox="0 0 20 20"><path d="M4.6 9 V3.7 Q4.6 3.1 5.2 3.1 H8.6 L9.7 5.2 H16.2 V15.5" fill="#dfe6f0" stroke="#d08c00" stroke-width="1.1"/><path d="M2.3 8.5 H14.8 L16.6 15.5 H4.3Z" fill="#f8d000" stroke="#d08c00" stroke-width="1.1" stroke-linejoin="round"/></svg>
<div class="t" style="left:37.21px;top:455.84px;font-size:12px;color:#000;font-weight:bold;transform:scaleX(0.9657);transform-origin:0 0;">Spread Filter</div>
<div class="a" style="left:16px;top:476px;width:1115px;height:19px;background:#ebebeb;"></div>
<div class="a" style="left:16px;top:495px;width:1115px;height:1px;background:#cdcdcd;"></div>
<div class="a" style="left:37px;top:479px;width:13px;height:13px;border:1px solid #0e5aa7;background:transparent"></div>
<svg style="left:39px;top:482px" width="9" height="7" viewBox="0 0 9 7"><path d="M0.8 3.4 L3.3 5.8 L8.3 0.8" stroke="#a0a0a0" stroke-width="1.25" fill="none"/></svg>
<div class="t" style="left:54.49px;top:475.84px;font-size:12px;color:#000;font-weight:normal;transform:scaleX(1.0087);transform-origin:0 0;">Maximum Spread</div>
<div class="a" style="left:402px;top:476px;width:1px;height:19px;background:#d5d5d5;"></div>
<div class="a" style="left:982px;top:476px;width:1px;height:19px;background:#d5d5d5;"></div>
<div class="t" style="left:406.13px;top:475.84px;font-size:12px;color:#000;font-weight:normal;transform:scaleX(0.9267);transform-origin:0 0;">0|0|0|0|0</div>
<div class="a" style="left:16px;top:496px;width:1115px;height:19px;background:#fff;"></div>
<div class="a" style="left:16px;top:515px;width:1115px;height:1px;background:#cdcdcd;"></div>
<div class="a" style="left:37px;top:499px;width:13px;height:13px;border:1px solid #0e5aa7;background:transparent"></div>
<svg style="left:39px;top:502px" width="9" height="7" viewBox="0 0 9 7"><path d="M0.8 3.4 L3.3 5.8 L8.3 0.8" stroke="#a0a0a0" stroke-width="1.25" fill="none"/></svg>
<div class="t" style="left:54.50px;top:495.84px;font-size:12px;color:#000;font-weight:normal;">Entry deviation allowed (a multiplier of spread)</div>
<div class="a" style="left:402px;top:496px;width:1px;height:19px;background:#d5d5d5;"></div>
<div class="a" style="left:982px;top:496px;width:1px;height:19px;background:#d5d5d5;"></div>
<div class="t" style="left:406.13px;top:495.84px;font-size:12px;color:#000;font-weight:normal;transform:scaleX(0.9200);transform-origin:0 0;">3|3|3|3|3</div>
<div class="a" style="left:16px;top:516px;width:1115px;height:19px;background:#ebebeb;"></div>
<div class="a" style="left:16px;top:535px;width:1115px;height:1px;background:#cdcdcd;"></div>
<svg style="left:16px;top:516px" width="20" height="20" viewBox="0 0 20 20"><path d="M4.6 9 V3.7 Q4.6 3.1 5.2 3.1 H8.6 L9.7 5.2 H16.2 V15.5" fill="#dfe6f0" stroke="#d08c00" stroke-width="1.1"/><path d="M2.3 8.5 H14.8 L16.6 15.5 H4.3Z" fill="#f8d000" stroke="#d08c00" stroke-width="1.1" stroke-linejoin="round"/></svg>
<div class="t" style="left:36.71px;top:515.84px;font-size:12px;color:#000;font-weight:bold;transform:scaleX(0.9848);transform-origin:0 0;">Limit order Settings</div>
<div class="a" style="left:16px;top:536px;width:1115px;height:19px;background:#fff;"></div>
<div class="a" style="left:16px;top:555px;width:1115px;height:1px;background:#cdcdcd;"></div>
<div class="a" style="left:37px;top:539px;width:13px;height:13px;border:1px solid #0e5aa7;background:transparent"></div>
<svg style="left:39px;top:542px" width="9" height="7" viewBox="0 0 9 7"><path d="M0.8 3.4 L3.3 5.8 L8.3 0.8" stroke="#a0a0a0" stroke-width="1.25" fill="none"/></svg>
<div class="t" style="left:54.55px;top:535.84px;font-size:12px;color:#000;font-weight:normal;transform:scaleX(0.9514);transform-origin:0 0;">MARKET or LIMIT order</div>
<div class="a" style="left:402px;top:536px;width:1px;height:19px;background:#d5d5d5;"></div>
<div class="a" style="left:982px;top:536px;width:1px;height:19px;background:#d5d5d5;"></div>
<div class="t" style="left:405.59px;top:535.84px;font-size:12px;color:#000;font-weight:normal;transform:scaleX(0.9062);transform-origin:0 0;">MARKET|MARKET|MARKET|MARKET|MARKET</div>
<div class="a" style="left:16px;top:556px;width:1115px;height:19px;background:#ebebeb;"></div>
<div class="a" style="left:16px;top:575px;width:1115px;height:1px;background:#cdcdcd;"></div>
<svg style="left:16px;top:556px" width="20" height="20" viewBox="0 0 20 20"><path d="M4.6 9 V3.7 Q4.6 3.1 5.2 3.1 H8.6 L9.7 5.2 H16.2 V15.5" fill="#dfe6f0" stroke="#d08c00" stroke-width="1.1"/><path d="M2.3 8.5 H14.8 L16.6 15.5 H4.3Z" fill="#f8d000" stroke="#d08c00" stroke-width="1.1" stroke-linejoin="round"/></svg>
<div class="t" style="left:37.40px;top:555.84px;font-size:12px;color:#000;font-weight:bold;transform:scaleX(0.9617);transform-origin:0 0;">Time Frames</div>
<div class="a" style="left:16px;top:576px;width:1115px;height:19px;background:#fff;"></div>
<div class="a" style="left:16px;top:595px;width:1115px;height:1px;background:#cdcdcd;"></div>
<svg style="left:16px;top:576px" width="20" height="20" viewBox="0 0 20 20"><path d="M4.6 9 V3.7 Q4.6 3.1 5.2 3.1 H8.6 L9.7 5.2 H16.2 V15.5" fill="#dfe6f0" stroke="#d08c00" stroke-width="1.1"/><path d="M2.3 8.5 H14.8 L16.6 15.5 H4.3Z" fill="#f8d000" stroke="#d08c00" stroke-width="1.1" stroke-linejoin="round"/></svg>
<div class="t" style="left:37.21px;top:575.84px;font-size:12px;color:#000;font-weight:bold;transform:scaleX(0.9692);transform-origin:0 0;">Anchor Indicator Settings</div>
<div class="a" style="left:16px;top:596px;width:1115px;height:19px;background:#ebebeb;"></div>
<div class="a" style="left:16px;top:615px;width:1115px;height:1px;background:#cdcdcd;"></div>
<div class="a" style="left:37px;top:599px;width:13px;height:13px;border:1px solid #0e5aa7;background:transparent"></div>
<svg style="left:39px;top:602px" width="9" height="7" viewBox="0 0 9 7"><path d="M0.8 3.4 L3.3 5.8 L8.3 0.8" stroke="#a0a0a0" stroke-width="1.25" fill="none"/></svg>
<div class="t" style="left:54.55px;top:595.84px;font-size:12px;color:#000;font-weight:normal;transform:scaleX(0.9522);transform-origin:0 0;">BBands_price_type</div>
<div class="a" style="left:402px;top:596px;width:1px;height:19px;background:#d5d5d5;"></div>
<div class="a" style="left:982px;top:596px;width:1px;height:19px;background:#d5d5d5;"></div>
<div class="a" style="left:547px;top:596px;width:1px;height:19px;background:#d5d5d5;"></div>
<div class="a" style="left:692px;top:596px;width:1px;height:19px;background:#d5d5d5;"></div>
<div class="a" style="left:837px;top:596px;width:1px;height:19px;background:#d5d5d5;"></div>
<div class="t" style="left:405.91px;top:595.84px;font-size:12px;color:#000;font-weight:normal;transform:scaleX(0.9762);transform-origin:0 0;">Close price</div>
<div class="t" style="left:550.92px;top:595.84px;font-size:12px;color:#6d6d6d;font-weight:normal;transform:scaleX(0.9694);transform-origin:0 0;">Close price</div>
<div class="t" style="left:841.30px;top:595.84px;font-size:12px;color:#6d6d6d;font-weight:normal;">Weighted price</div>
<div class="a" style="left:16px;top:616px;width:1115px;height:19px;background:#fff;"></div>
<div class="a" style="left:16px;top:635px;width:1115px;height:1px;background:#cdcdcd;"></div>
<div class="a" style="left:37px;top:619px;width:13px;height:13px;border:1px solid #0e5aa7;background:transparent"></div>
<svg style="left:39px;top:622px" width="9" height="7" viewBox="0 0 9 7"><path d="M0.8 3.4 L3.3 5.8 L8.3 0.8" stroke="#a0a0a0" stroke-width="1.25" fill="none"/></svg>
<div class="t" style="left:54.54px;top:615.84px;font-size:12px;color:#000;font-weight:normal;transform:scaleX(0.9580);transform-origin:0 0;">MA_type_Anchor_TF</div>
<div class="a" style="left:402px;top:616px;width:1px;height:19px;background:#d5d5d5;"></div>
<div class="a" style="left:982px;top:616px;width:1px;height:19px;background:#d5d5d5;"></div>
<div class="a" style="left:547px;top:616px;width:1px;height:19px;background:#d5d5d5;"></div>
<div class="a" style="left:692px;top:616px;width:1px;height:19px;background:#d5d5d5;"></div>
<div class="a" style="left:837px;top:616px;width:1px;height:19px;background:#d5d5d5;"></div>
<div class="t" style="left:405.49px;top:615.84px;font-size:12px;color:#000;font-weight:normal;transform:scaleX(1.0066);transform-origin:0 0;">Exponential</div>
<div class="t" style="left:551.00px;top:615.84px;font-size:12px;color:#6d6d6d;font-weight:normal;transform:scaleX(0.9916);transform-origin:0 0;">Simple</div>
<div class="t" style="left:840.29px;top:615.84px;font-size:12px;color:#6d6d6d;font-weight:normal;transform:scaleX(1.0060);transform-origin:0 0;">Linear weighted</div>
<div class="a" style="left:16px;top:636px;width:1115px;height:19px;background:#ebebeb;"></div>
<div class="a" style="left:16px;top:655px;width:1115px;height:1px;background:#cdcdcd;"></div>
<div class="a" style="left:37px;top:639px;width:13px;height:13px;border:1px solid #0e5aa7;background:transparent"></div>
<svg style="left:39px;top:642px" width="9" height="7" viewBox="0 0 9 7"><path d="M0.8 3.4 L3.3 5.8 L8.3 0.8" stroke="#a0a0a0" stroke-width="1.25" fill="none"/></svg>
<div class="t" style="left:54.54px;top:635.84px;font-size:12px;color:#000;font-weight:normal;transform:scaleX(0.9649);transform-origin:0 0;">MA_period_Anchor_TF</div>
<div class="a" style="left:402px;top:636px;width:1px;height:19px;background:#d5d5d5;"></div>
<div class="a" style="left:982px;top:636px;width:1px;height:19px;background:#d5d5d5;"></div>
<div class="a" style="left:547px;top:636px;width:1px;height:19px;background:#d5d5d5;"></div>
<div class="a" style="left:692px;top:636px;width:1px;height:19px;background:#d5d5d5;"></div>
<div class="a" style="left:837px;top:636px;width:1px;height:19px;background:#d5d5d5;"></div>
<div class="t" style="left:405.64px;top:635.84px;font-size:12px;color:#000;font-weight:normal;transform:scaleX(0.9583);transform-origin:0 0;">10</div>
<div class="t" style="left:550.64px;top:635.84px;font-size:12px;color:#6d6d6d;font-weight:normal;transform:scaleX(0.9583);transform-origin:0 0;">10</div>
<div class="t" style="left:695.60px;top:635.84px;font-size:12px;color:#6d6d6d;font-weight:normal;">1</div>
<div class="t" style="left:840.45px;top:635.84px;font-size:12px;color:#6d6d6d;font-weight:normal;transform:scaleX(0.9409);transform-origin:0 0;">100</div>
<div class="a" style="left:16px;top:656px;width:1115px;height:19px;background:#fff;"></div>
<div class="a" style="left:16px;top:675px;width:1115px;height:1px;background:#cdcdcd;"></div>
<svg style="left:16px;top:656px" width="20" height="20" viewBox="0 0 20 20"><path d="M4.6 9 V3.7 Q4.6 3.1 5.2 3.1 H8.6 L9.7 5.2 H16.2 V15.5" fill="#dfe6f0" stroke="#d08c00" stroke-width="1.1"/><path d="M2.3 8.5 H14.8 L16.6 15.5 H4.3Z" fill="#f8d000" stroke="#d08c00" stroke-width="1.1" stroke-linejoin="round"/></svg>
<div class="t" style="left:37.22px;top:655.84px;font-size:12px;color:#000;font-weight:bold;transform:scaleX(0.9426);transform-origin:0 0;">Stop Lot Sizes</div>
<div class="a" style="left:16px;top:676px;width:1115px;height:19px;background:#ebebeb;"></div>
<div class="a" style="left:16px;top:695px;width:1115px;height:1px;background:#cdcdcd;"></div>
<div class="a" style="left:37px;top:679px;width:13px;height:13px;border:1px solid #0e5aa7;background:transparent"></div>
<svg style="left:39px;top:682px" width="9" height="7" viewBox="0 0 9 7"><path d="M0.8 3.4 L3.3 5.8 L8.3 0.8" stroke="#a0a0a0" stroke-width="1.25" fill="none"/></svg>
<div class="t" style="left:54.55px;top:675.84px;font-size:12px;color:#000;font-weight:normal;transform:scaleX(0.9545);transform-origin:0 0;">Fixed Lot size</div>
<div class="a" style="left:402px;top:676px;width:1px;height:19px;background:#d5d5d5;"></div>
<div class="a" style="left:982px;top:676px;width:1px;height:19px;background:#d5d5d5;"></div>
<div class="a" style="left:547px;top:676px;width:1px;height:19px;background:#d5d5d5;"></div>
<div class="a" style="left:692px;top:676px;width:1px;height:19px;background:#d5d5d5;"></div>
<div class="a" style="left:837px;top:676px;width:1px;height:19px;background:#d5d5d5;"></div>
<div class="t" style="left:406.13px;top:675.84px;font-size:12px;color:#000;font-weight:normal;transform:scaleX(0.9241);transform-origin:0 0;">0.0</div>
<div class="t" style="left:551.13px;top:675.84px;font-size:12px;color:#6d6d6d;font-weight:normal;transform:scaleX(0.9241);transform-origin:0 0;">0.0</div>
<div class="t" style="left:696.13px;top:675.84px;font-size:12px;color:#6d6d6d;font-weight:normal;transform:scaleX(0.9241);transform-origin:0 0;">0.0</div>
<div class="t" style="left:840.93px;top:675.84px;font-size:12px;color:#6d6d6d;font-weight:normal;transform:scaleX(0.9241);transform-origin:0 0;">0.0</div>
<div class="a" style="left:16px;top:696px;width:1115px;height:19px;background:#0078d7;"></div>
<div class="a" style="left:16px;top:715px;width:1115px;height:1px;background:#cdcdcd;"></div>
<div class="a" style="left:37px;top:699px;width:13px;height:13px;border:1px solid #0a4a90;background:#fff"></div>
<svg style="left:39px;top:702px" width="9" height="7" viewBox="0 0 9 7"><path d="M0.8 3.4 L3.3 5.8 L8.3 0.8" stroke="#a0a0a0" stroke-width="1.25" fill="none"/></svg>
<div class="t" style="left:54.56px;top:695.84px;font-size:12px;color:#fff;font-weight:normal;transform:scaleX(0.9444);transform-origin:0 0;">Risk %</div>
<div class="a" style="left:402px;top:696px;width:1px;height:19px;background:#9cc3ea;"></div>
<div class="a" style="left:982px;top:696px;width:1px;height:19px;background:#9cc3ea;"></div>
<div class="a" style="left:547px;top:696px;width:1px;height:19px;background:#9cc3ea;"></div>
<div class="a" style="left:692px;top:696px;width:1px;height:19px;background:#9cc3ea;"></div>
<div class="a" style="left:837px;top:696px;width:1px;height:19px;background:#9cc3ea;"></div>
<div class="t" style="left:405.64px;top:695.84px;font-size:12px;color:#fff;font-weight:normal;transform:scaleX(0.9542);transform-origin:0 0;">1.0</div>
<div class="t" style="left:550.64px;top:695.84px;font-size:12px;color:#fff;font-weight:normal;transform:scaleX(0.9542);transform-origin:0 0;">1.0</div>
<div class="t" style="left:696.14px;top:695.84px;font-size:12px;color:#fff;font-weight:normal;transform:scaleX(0.9108);transform-origin:0 0;">0.1</div>
<div class="t" style="left:840.45px;top:695.84px;font-size:12px;color:#fff;font-weight:normal;transform:scaleX(0.9409);transform-origin:0 0;">10.0</div>
<div class="a" style="left:16px;top:716px;width:1115px;height:19px;background:#ebebeb;"></div>
<div class="a" style="left:16px;top:735px;width:1115px;height:1px;background:#cdcdcd;"></div>
<div class="a" style="left:37px;top:719px;width:13px;height:13px;border:1px solid #0e5aa7;background:transparent"></div>
<svg style="left:39px;top:722px" width="9" height="7" viewBox="0 0 9 7"><path d="M0.8 3.4 L3.3 5.8 L8.3 0.8" stroke="#a0a0a0" stroke-width="1.25" fill="none"/></svg>
<div class="t" style="left:54.49px;top:715.84px;font-size:12px;color:#000;font-weight:normal;transform:scaleX(1.0093);transform-origin:0 0;">Fixed Dollar Amount</div>
<div class="a" style="left:402px;top:716px;width:1px;height:19px;background:#d5d5d5;"></div>
<div class="a" style="left:982px;top:716px;width:1px;height:19px;background:#d5d5d5;"></div>
<div class="a" style="left:547px;top:716px;width:1px;height:19px;background:#d5d5d5;"></div>
<div class="a" style="left:692px;top:716px;width:1px;height:19px;background:#d5d5d5;"></div>
<div class="a" style="left:837px;top:716px;width:1px;height:19px;background:#d5d5d5;"></div>
<div class="t" style="left:406.14px;top:715.84px;font-size:12px;color:#000;font-weight:normal;transform:scaleX(0.8966);transform-origin:0 0;">0</div>
<div class="t" style="left:551.14px;top:715.84px;font-size:12px;color:#6d6d6d;font-weight:normal;transform:scaleX(0.8966);transform-origin:0 0;">0</div>
<div class="t" style="left:695.60px;top:715.84px;font-size:12px;color:#6d6d6d;font-weight:normal;">1</div>
<div class="t" style="left:840.40px;top:715.84px;font-size:12px;color:#6d6d6d;font-weight:normal;">10</div>
<div class="a" style="left:16px;top:736px;width:1115px;height:19px;background:#fff;"></div>
<div class="a" style="left:16px;top:755px;width:1115px;height:1px;background:#cdcdcd;"></div>
<svg style="left:16px;top:736px" width="20" height="20" viewBox="0 0 20 20"><path d="M4.6 9 V3.7 Q4.6 3.1 5.2 3.1 H8.6 L9.7 5.2 H16.2 V15.5" fill="#dfe6f0" stroke="#d08c00" stroke-width="1.1"/><path d="M2.3 8.5 H14.8 L16.6 15.5 H4.3Z" fill="#f8d000" stroke="#d08c00" stroke-width="1.1" stroke-linejoin="round"/></svg>
<div class="t" style="left:36.72px;top:735.84px;font-size:12px;color:#000;font-weight:bold;transform:scaleX(0.9761);transform-origin:0 0;">Direction - Both, Long, Short</div>
<div class="a" style="left:16px;top:756px;width:1115px;height:19px;background:#ebebeb;"></div>
<div class="a" style="left:16px;top:775px;width:1115px;height:1px;background:#cdcdcd;"></div>
<svg style="left:16px;top:756px" width="20" height="20" viewBox="0 0 20 20"><path d="M4.6 9 V3.7 Q4.6 3.1 5.2 3.1 H8.6 L9.7 5.2 H16.2 V15.5" fill="#dfe6f0" stroke="#d08c00" stroke-width="1.1"/><path d="M2.3 8.5 H14.8 L16.6 15.5 H4.3Z" fill="#f8d000" stroke="#d08c00" stroke-width="1.1" stroke-linejoin="round"/></svg>
<div class="t" style="left:37.02px;top:755.84px;font-size:12px;color:#000;font-weight:bold;transform:scaleX(0.9660);transform-origin:0 0;">Custom Trade Comment</div>
<div class="a" style="left:1131px;top:189px;width:17px;height:586px;background:#f0f0f0;"></div>
<svg style="left:1136px;top:198px" width="8" height="6" viewBox="0 0 8 6"><path d="M0.8 5 L4 1.8 L7.2 5" stroke="#555" stroke-width="2" fill="none"/></svg>
<svg style="left:1136px;top:764px" width="8" height="6" viewBox="0 0 8 6"><path d="M0.8 0.8 L4 4 L7.2 0.8" stroke="#555" stroke-width="2" fill="none"/></svg>
<div class="a" style="left:1132px;top:209px;width:15px;height:337px;background:#cdcdcd;"></div>
<div class="a" style="left:16px;top:775px;width:1132px;height:1px;background:#000;"></div>
<div class="a" style="left:16px;top:776px;width:1132px;height:20px;background:#f0f0f0;"></div>
<div class="a" style="left:149px;top:775px;width:54px;height:21px;background:#fff;border:1px solid #000;border-top:none;border-right-width:2px;border-bottom-width:2px"></div>
<div class="t" style="left:28.11px;top:774.84px;font-size:12px;color:#6d6d6d;font-weight:normal;transform:scaleX(0.9717);transform-origin:0 0;">Overview</div>
<div class="t" style="left:97.11px;top:774.84px;font-size:12px;color:#6d6d6d;font-weight:normal;transform:scaleX(0.9718);transform-origin:0 0;">Settings</div>
<div class="t" style="left:211.43px;top:774.84px;font-size:12px;color:#6d6d6d;font-weight:normal;transform:scaleX(0.9689);transform-origin:0 0;">Backtest</div>
<div class="t" style="left:275.91px;top:774.84px;font-size:12px;color:#6d6d6d;font-weight:normal;transform:scaleX(0.9781);transform-origin:0 0;">Graph</div>
<div class="t" style="left:328.10px;top:774.84px;font-size:12px;color:#6d6d6d;font-weight:normal;transform:scaleX(0.9927);transform-origin:0 0;">Optimization Results</div>
<div class="t" style="left:457.30px;top:774.84px;font-size:12px;color:#6d6d6d;font-weight:normal;">Agents</div>
<div class="t" style="left:513.80px;top:774.84px;font-size:12px;color:#6d6d6d;font-weight:normal;transform:scaleX(0.9896);transform-origin:0 0;">Journal</div>
<div class="t" style="left:158.35px;top:774.84px;font-size:12px;color:#000;font-weight:normal;transform:scaleX(1.0417);transform-origin:0 0;">Inputs</div>
<div class="a" style="left:87px;top:779px;width:1px;height:13px;background:#6d6d6d;"></div>
<div class="a" style="left:266px;top:779px;width:1px;height:13px;background:#6d6d6d;"></div>
<div class="a" style="left:318px;top:779px;width:1px;height:13px;background:#6d6d6d;"></div>
<div class="a" style="left:447px;top:779px;width:1px;height:13px;background:#6d6d6d;"></div>
<div class="a" style="left:504px;top:779px;width:1px;height:13px;background:#6d6d6d;"></div>
<div class="t" style="left:968.83px;top:776.84px;font-size:12px;color:#000;font-weight:normal;transform:scaleX(0.9141);transform-origin:0 0;">01:57:54 / 01:58:01</div>
<div class="a" style="left:1073px;top:778px;width:74px;height:17px;background:#99cc66"></div>
<div class="t" style="left:1097.83px;top:776.84px;font-size:12px;color:#000;font-weight:normal;transform:scaleX(0.9395);transform-origin:0 0;">Start</div>
<div class="a" style="left:0px;top:798px;width:1152px;height:2px;background:#f0f0f0;"></div>
<div class="a" style="left:0px;top:800px;width:1152px;height:1px;background:#d8d8d8;"></div>
<div class="a" style="left:0px;top:801px;width:1152px;height:22px;background:#f0f0f0;"></div>
<div class="a" style="left:0px;top:823px;width:1152px;height:2px;background:#283040;"></div>
<div class="t" style="left:1.67px;top:803.84px;font-size:12px;color:#000;font-weight:normal;transform:scaleX(0.9320);transform-origin:0 0;">For Help, press F1</div>
<div class="a" style="left:459px;top:805px;width:1px;height:18px;background:#a0a0a0;"></div>
<div class="a" style="left:587px;top:805px;width:1px;height:18px;background:#a0a0a0;"></div>
<div class="a" style="left:685px;top:805px;width:1px;height:18px;background:#a0a0a0;"></div>
<div class="a" style="left:756px;top:805px;width:1px;height:18px;background:#a0a0a0;"></div>
<div class="a" style="left:827px;top:805px;width:1px;height:18px;background:#a0a0a0;"></div>
<div class="a" style="left:895px;top:805px;width:1px;height:18px;background:#a0a0a0;"></div>
<div class="a" style="left:965px;top:805px;width:1px;height:18px;background:#a0a0a0;"></div>
<div class="a" style="left:1031px;top:805px;width:1px;height:18px;background:#a0a0a0;"></div>
<div class="t" style="left:464.49px;top:803.84px;font-size:12px;color:#000;font-weight:normal;transform:scaleX(1.0054);transform-origin:0 0;">Default</div>
<svg style="left:1037px;top:808px" width="14" height="11" viewBox="0 0 14 11"><rect x="0" y="7.8" width="2" height="2.2" fill="#22aa33"/><rect x="3" y="5.6" width="2" height="4.4" fill="#22aa33"/><rect x="6" y="3.4" width="2" height="6.6" fill="#22aa33"/><rect x="9" y="1.2" width="2" height="8.8" fill="#22aa33"/><rect x="12" y="-1.0" width="2" height="11.0" fill="#22aa33"/></svg>
<div class="t" style="left:1056.84px;top:803.84px;font-size:12px;color:#000;font-weight:normal;transform:scaleX(0.9339);transform-origin:0 0;">21.41 ms</div>
</body></html>
